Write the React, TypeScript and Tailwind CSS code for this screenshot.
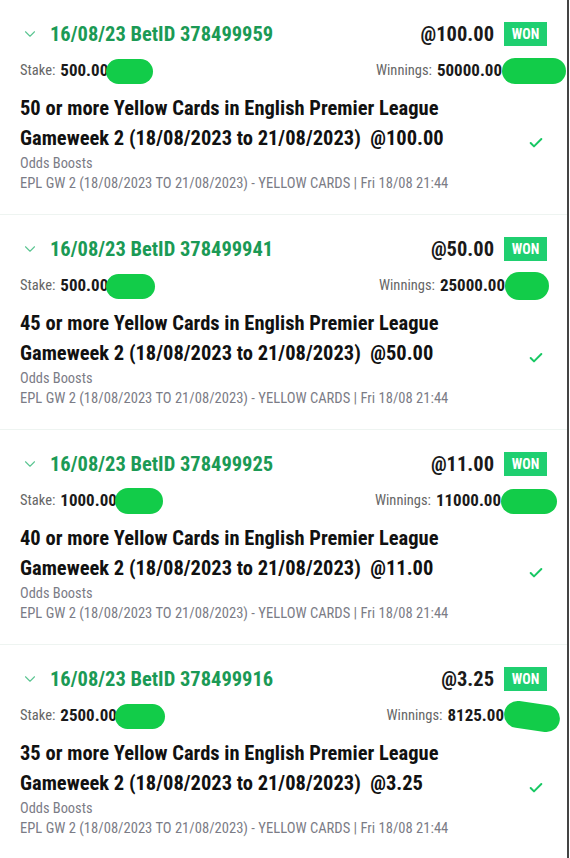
import { Check, ChevronDown } from 'lucide-react';

type Bet = {
  id: string;
  odds: string;
  stake: string;
  winnings: string;
  count: number;
  stakeBlob: string;
  winBlob: string;
};

const bets: Bet[] = [
  { id: '378499959', odds: '100.00', stake: '500.00', winnings: '50000.00', count: 50, stakeBlob: 'w-[47px] h-[25px] -ml-[2px]', winBlob: 'w-[64px] h-[26px] -mr-[19px]' },
  { id: '378499941', odds: '50.00', stake: '500.00', winnings: '25000.00', count: 45, stakeBlob: 'w-[49px] h-[25px] -ml-[2px]', winBlob: 'w-[44px] h-[28px] -mr-[2px]' },
  { id: '378499925', odds: '11.00', stake: '1000.00', winnings: '11000.00', count: 40, stakeBlob: 'w-[48px] h-[26px] -ml-[2px]', winBlob: 'w-[56px] h-[25px] -mr-[10px]' },
  { id: '378499916', odds: '3.25', stake: '2500.00', winnings: '8125.00', count: 35, stakeBlob: 'w-[50px] h-[25px] -ml-[2px]', winBlob: 'w-[56px] h-[27px] -mr-[13px] rotate-[8deg]' },
];

const font = { fontFamily: '"Roboto Condensed", "Liberation Sans Narrow", Roboto, sans-serif' };

function BetCard({ bet }: { bet: Bet }) {
  return (
    <div className="px-5 pt-[22px] pb-[21px] border-b border-[#eef4f1]">
      {/* header */}
      <div className="flex items-center justify-between h-6">
        <div className="flex items-center">
          <ChevronDown className="w-[18px] h-[18px] text-[#5cc592] ml-[1px] mr-[11px]" strokeWidth={1.5} />
          <span className="text-[20.5px] font-bold text-[#1b9a55]">16/08/23 BetID {bet.id}</span>
        </div>
        <div className="flex items-center">
          <span className="text-[20.5px] font-bold text-[#1a1a1a] mr-[10px]">@{bet.odds}</span>
          <span className="h-6 w-[43px] justify-center flex items-center bg-[#1fcf70] text-white text-[14px] font-bold">WON</span>
        </div>
      </div>

      {/* stake / winnings */}
      <div className="flex items-center justify-between h-5 mt-[15px]">
        <div className="flex items-center">
          <span className="text-[14.5px] text-[#666] mr-[5px]">Stake:</span>
          <span className="text-[17px] font-bold text-[#1a1a1a]">{bet.stake}</span>
          <span className={`inline-block rounded-full bg-[#12cc49] ${bet.stakeBlob}`} />
        </div>
        <div className="flex items-center">
          <span className="text-[14.5px] text-[#666] mr-[5px]">Winnings:</span>
          <span className="text-[17px] font-bold text-[#1a1a1a]">{bet.winnings}</span>
          <span className={`inline-block rounded-full bg-[#12cc49] ${bet.winBlob}`} />
        </div>
      </div>

      {/* body */}
      <div className="flex items-center justify-between mt-3">
        <div>
          <div className="text-[20.5px] leading-[30px] font-bold text-[#111]">
            {bet.count} or more Yellow Cards in English Premier League
            <br />
            Gameweek 2 (18/08/2023 to 21/08/2023)&nbsp; @{bet.odds}
          </div>
          <div className="text-[14.4px] leading-[19px] pt-[1px] text-[#7b7c86]">Odds Boosts</div>
          <div className="text-[14.6px] leading-[20px] text-[#7b7c86]">
            EPL GW 2 (18/08/2023 TO 21/08/2023) - YELLOW CARDS | Fri 18/08 21:44
          </div>
        </div>
        <Check className="w-4 h-4 text-[#18c864] mr-[3px]" strokeWidth={3} />
      </div>
    </div>
  );
}

export default function App() {
  return (
    <div className="w-[569px] min-h-[858px] bg-white border-r-2 border-[#444] overflow-hidden" style={font}>
      {bets.map((b) => (
        <BetCard key={b.id} bet={b} />
      ))}
    </div>
  );
}
